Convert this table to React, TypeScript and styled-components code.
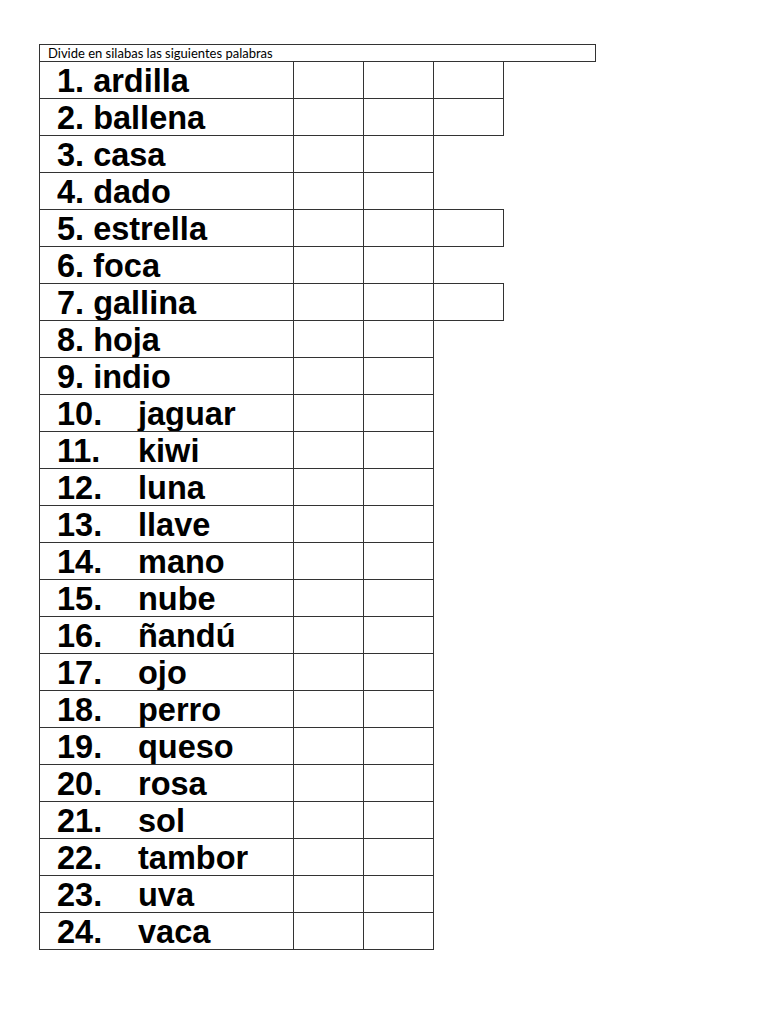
import styled, { createGlobalStyle } from "styled-components"

type Word = { n: number; word: string; extra: number }

const words: Word[] = [
  { n: 1, word: "ardilla", extra: 3 },
  { n: 2, word: "ballena", extra: 3 },
  { n: 3, word: "casa", extra: 2 },
  { n: 4, word: "dado", extra: 2 },
  { n: 5, word: "estrella", extra: 3 },
  { n: 6, word: "foca", extra: 2 },
  { n: 7, word: "gallina", extra: 3 },
  { n: 8, word: "hoja", extra: 2 },
  { n: 9, word: "indio", extra: 2 },
  { n: 10, word: "jaguar", extra: 2 },
  { n: 11, word: "kiwi", extra: 2 },
  { n: 12, word: "luna", extra: 2 },
  { n: 13, word: "llave", extra: 2 },
  { n: 14, word: "mano", extra: 2 },
  { n: 15, word: "nube", extra: 2 },
  { n: 16, word: "ñandú", extra: 2 },
  { n: 17, word: "ojo", extra: 2 },
  { n: 18, word: "perro", extra: 2 },
  { n: 19, word: "queso", extra: 2 },
  { n: 20, word: "rosa", extra: 2 },
  { n: 21, word: "sol", extra: 2 },
  { n: 22, word: "tambor", extra: 2 },
  { n: 23, word: "uva", extra: 2 },
  { n: 24, word: "vaca", extra: 2 },
]

const GlobalStyle = createGlobalStyle`
  body {
    margin: 0;
    background: #fff;
  }
`

const Page = styled.div`
  width: 768px;
  height: 1024px;
  padding: 44px 0 0 39px;
  box-sizing: border-box;
`

const Header = styled.div`
  width: 557px;
  height: 18px;
  box-sizing: border-box;
  border: 1px solid #333;
  padding: 0 0 0 8px;
  font-family: Lato, "Open Sans", sans-serif;
  font-size: 13px;
  line-height: 16px;
  color: #000;
  white-space: nowrap;
`

const Row = styled.div`
  display: flex;
  margin-top: -1px;
`

const WordCell = styled.div`
  width: 255px;
  height: 38px;
  box-sizing: border-box;
  border: 1px solid #333;
  padding: 2px 0 0 17px;
  display: flex;
  align-items: center;
  font-family: "Liberation Sans", Arial, sans-serif;
  font-weight: 700;
  font-size: 32.5px;
  line-height: 34px;
  color: #000;
  white-space: pre;
`

const Num = styled.span<{ $wide: boolean }>`
  display: inline-block;
  width: ${(p) => (p.$wide ? "81px" : "auto")};
`

const SyllableCell = styled.div`
  width: 71px;
  height: 38px;
  box-sizing: border-box;
  border: 1px solid #333;
  margin-left: -1px;
`

const App = () => (
  <>
    <GlobalStyle />
    <Page>
      <Header>Divide en silabas las siguientes palabras</Header>
      {words.map((w) => (
        <Row key={w.n}>
          <WordCell>
            <Num $wide={w.n >= 10}>{w.n >= 10 ? `${w.n}.` : `${w.n}. `}</Num>
            {w.word}
          </WordCell>
          {Array.from({ length: w.extra }, (_, i) => (
            <SyllableCell key={i} />
          ))}
        </Row>
      ))}
    </Page>
  </>
)

export default App
